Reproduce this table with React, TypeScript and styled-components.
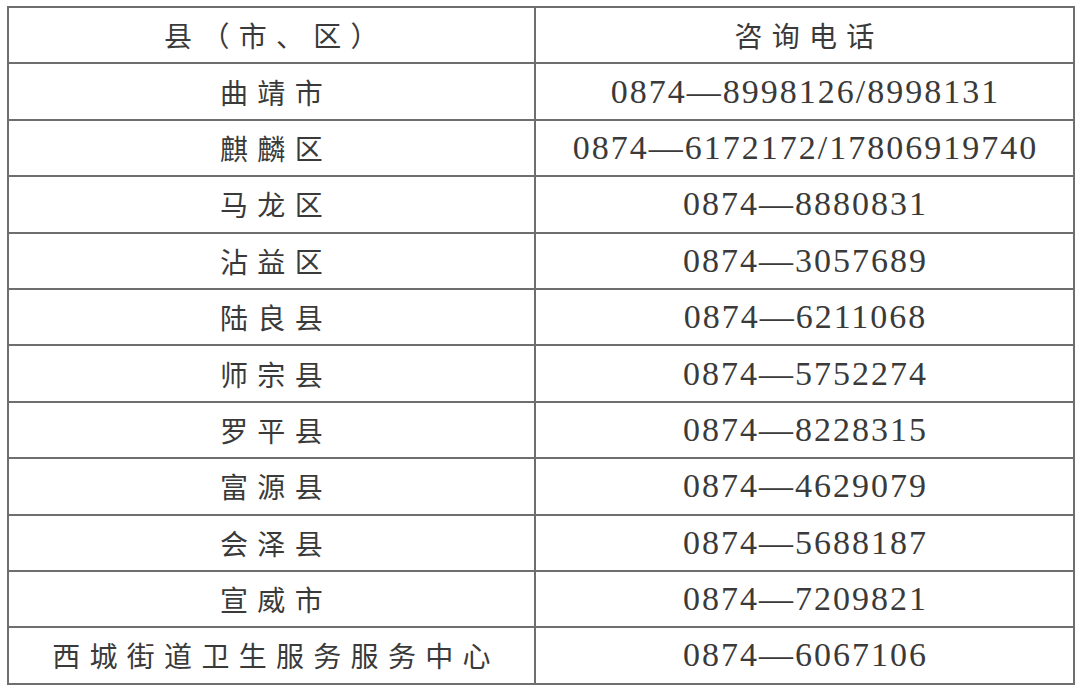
import React from 'react';
import styled, { createGlobalStyle } from 'styled-components';

const GlobalStyle = createGlobalStyle`
  html, body {
    margin: 0;
    padding: 0;
    background: #ffffff;
  }
`;

const Page = styled.div`
  width: 1080px;
  height: 690px;
  padding: 6px 0 0 7px;
  box-sizing: border-box;
`;

const Table = styled.table`
  width: 1068px;
  height: 677px;
  border-collapse: collapse;
  table-layout: fixed;
  border: 2px solid #6e6e6e;
`;

const Row = styled.tr`
  height: 56.4px;
`;

const Cell = styled.td<{ $phone?: boolean }>`
  border: 2px solid #6e6e6e;
  padding: 0 0 0 ${(p) => (p.$phone ? '2px' : '9px')};
  text-align: center;
  vertical-align: middle;
  white-space: nowrap;
  color: #3a3a3a;
  font-family: ${(p) =>
    p.$phone
      ? '"Liberation Serif", "Noto Sans CJK SC", serif'
      : '"Noto Sans CJK SC", sans-serif'};
  font-size: ${(p) => (p.$phone ? '34px' : '28px')};
  letter-spacing: ${(p) => (p.$phone ? '2px' : '9.3px')};
  line-height: 1;
`;

const rows: [string, string][] = [
  ['曲靖市', '0874—8998126/8998131'],
  ['麒麟区', '0874—6172172/17806919740'],
  ['马龙区', '0874—8880831'],
  ['沾益区', '0874—3057689'],
  ['陆良县', '0874—6211068'],
  ['师宗县', '0874—5752274'],
  ['罗平县', '0874—8228315'],
  ['富源县', '0874—4629079'],
  ['会泽县', '0874—5688187'],
  ['宣威市', '0874—7209821'],
  ['西城街道卫生服务服务中心', '0874—6067106'],
];

const App = () => {
  return (
    <>
      <GlobalStyle />
      <Page>
        <Table>
          <colgroup>
            <col style={{ width: 527 }} />
            <col />
          </colgroup>
          <tbody>
            <Row>
              <Cell>县（市、区）</Cell>
              <Cell>咨询电话</Cell>
            </Row>
            {rows.map(([area, phone]) => (
              <Row key={area}>
                <Cell>{area}</Cell>
                <Cell $phone>{phone}</Cell>
              </Row>
            ))}
          </tbody>
        </Table>
      </Page>
    </>
  );
};

export default App;
